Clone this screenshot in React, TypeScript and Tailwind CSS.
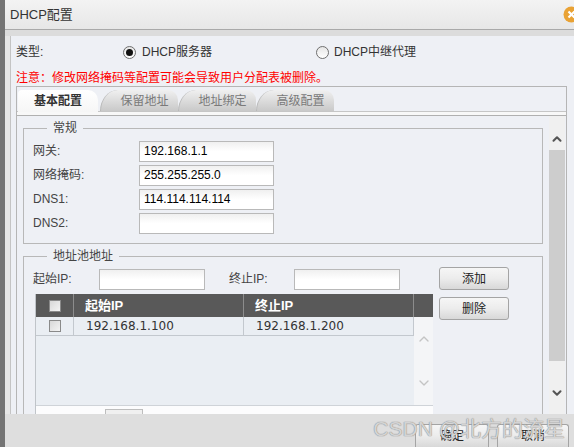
import { ChevronUp, ChevronDown } from "lucide-react";

const ui = "font-['Liberation_Sans','Noto_Sans_CJK_SC',sans-serif]";

function Radio({ checked }: { checked?: boolean }) {
  return (
    <span className="w-[13px] h-[13px] rounded-full border border-[#6f6f6f] bg-gradient-to-b from-[#e6e6e6] to-white flex items-center justify-center">
      {checked && <span className="w-[7px] h-[7px] rounded-full bg-[#111]" />}
    </span>
  );
}

function Field({ label, value }: { label: string; value?: string }) {
  return (
    <div className="h-[24px] flex items-center">
      <span className="w-[106px] text-[12px] text-[#444]">{label}</span>
      <div className="w-[135px] h-[21px] border border-[#b9b9b9] bg-gradient-to-b from-[#f0f0f0] via-white to-white pl-[4px] text-[12px] leading-[19px] text-black">
        {value}
      </div>
    </div>
  );
}

function Check() {
  return <span className="w-[12px] h-[12px] border border-[#8a8a8a] bg-gradient-to-br from-[#d8d8d8] to-[#f4f4f4] inline-block" />;
}

function Tab({ label, active }: { label: string; active?: boolean }) {
  if (active)
    return (
      <div className="w-[80px] h-[22px] mr-[2px] rounded-tr-[10px] rounded-tl-[4px] bg-gradient-to-b from-white to-[#f6f6f6] flex items-center justify-center text-[12px] font-bold text-[#333] relative top-px">
        {label}
      </div>
    );
  return (
    <div className="w-[78px] h-[21px] rounded-tr-[10px] rounded-tl-[18px_21px] bg-gradient-to-b from-[#f0f0f0] to-[#c9c9c9] flex items-center justify-center pl-[10px] text-[12px] text-[#7a7a7a] border-l border-[#b8b8b8]">
      {label}
    </div>
  );
}

function Button({ label, className = "" }: { label: string; className?: string }) {
  return (
    <div className={"h-[23px] border border-[#a4a4a4] rounded-[3px] bg-gradient-to-b from-[#f6f6f6] via-[#ececec] to-[#d8d8d8] flex items-center justify-center text-[12px] text-[#222] " + className}>
      {label}
    </div>
  );
}

export default function App() {
  return (
    <div className={"w-[574px] h-[447px] flex overflow-hidden relative bg-[#eef0f5] " + ui}>
      <div className="w-[5px] bg-[#747474]" />
      <div className="flex-1 flex flex-col min-w-0">
        {/* title bar */}
        <div className="h-[29px] bg-gradient-to-b from-[#f3f3f3] to-[#e7e7e7] flex items-center pl-[5px] text-[13px] text-[#333] relative">
          DHCP配置
          <svg className="absolute left-[558px] top-[6px]" width="17" height="17" viewBox="0 0 17 17">
            <circle cx="8.5" cy="8.5" r="8" fill="#e9a234" />
            <path d="M5.5 5.5l6 6M11.5 5.5l-6 6" stroke="#fff" strokeWidth="2.2" />
          </svg>
        </div>
        <div className="h-px bg-[#a9a9a9]" />
        <div className="h-[6px] bg-[#dcdcdc]" />

        {/* body */}
        <div className="flex-1 flex min-h-0">
          <div className="w-[5px] bg-[#e6e6e6] border-r border-[#c4c4c4] box-content" />
          <div className="flex-1 flex flex-col min-w-0 pl-[5px] pr-[7px] overflow-hidden">
            <div className="h-[20px] mt-[6px] flex items-center text-[12px] text-[#333]">
              <span className="w-[107px]">类型:</span>
              <div className="w-[193px] flex items-center gap-[6px]">
                <Radio checked />
                <span>DHCP服务器</span>
              </div>
              <div className="flex items-center gap-[5px]">
                <Radio />
                <span>DHCP中继代理</span>
              </div>
            </div>
            <div className="mt-[8px] h-[16px] leading-[16px] text-[12px] text-[#ff0000]">
              注意：修改网络掩码等配置可能会导致用户分配表被删除。
            </div>

            {/* tab box */}
            <div className="flex-1 flex flex-col border border-b-0 border-[#b5b5b5] min-h-0">
              <div className="h-[25px] flex items-end pl-px border-b border-[#c6c6c6]">
                <Tab label="基本配置" active />
                <Tab label="保留地址" />
                <Tab label="地址绑定" />
                <Tab label="高级配置" />
              </div>
              <div className="h-[3px] bg-[#f8f8f8]" />
              <div className="flex-1 flex border-t border-[#b0b0b0] min-h-0">
                <div className="flex-1 px-[6px] min-w-0">
                  {/* 常规 */}
                  <fieldset className="mt-[4px] border border-[#b8b8b8] pl-[9px] pb-[8px]">
                    <legend className="ml-[14px] px-[6px] text-[12px] leading-[16px] text-[#444]">常规</legend>
                    <div className="pt-[3px]">
                      <Field label="网关:" value="192.168.1.1" />
                      <Field label="网络掩码:" value="255.255.255.0" />
                      <Field label="DNS1:" value="114.114.114.114" />
                      <Field label="DNS2:" />
                    </div>
                  </fieldset>

                  {/* 地址池地址 */}
                  <fieldset className="mt-[4px] border border-[#b8b8b8] pl-[9px] pb-[8px]">
                    <legend className="ml-[14px] px-[6px] text-[12px] leading-[16px] text-[#444]">地址池地址</legend>
                    <div className="flex">
                      <div>
                        <div className="h-[24px] mt-[3px] flex items-center text-[12px] text-[#444]">
                          <span className="w-[66px]">起始IP:</span>
                          <div className="w-[106px] h-[21px] border border-[#b9b9b9] bg-gradient-to-b from-[#f0f0f0] via-white to-white" />
                          <span className="ml-[24px] w-[65px]">终止IP:</span>
                          <div className="w-[106px] h-[21px] border border-[#b9b9b9] bg-gradient-to-b from-[#f0f0f0] via-white to-white" />
                        </div>
                        {/* table */}
                        <div className="ml-[2px] mt-[3px] w-[398px] border-l border-[#c0c4c9]">
                          <div className="h-[23px] flex bg-[#595959] text-white text-[13px] font-bold">
                            <div className="w-[38px] border-r border-[#8c8c8c] flex items-center justify-center"><Check /></div>
                            <div className="w-[170px] border-r border-[#8c8c8c] flex items-center pl-[11px]">起始IP</div>
                            <div className="w-[170px] border-r border-[#8c8c8c] flex items-center pl-[11px]">终止IP</div>
                            <div className="flex-1" />
                          </div>
                          <div className="flex h-[88px]">
                            <div className="w-[378px] bg-[#eaeef3]">
                              <div className="h-[19px] flex border-b border-[#c3c8ce] text-[12px] text-[#333] font-['DejaVu_Sans',sans-serif]">
                                <div className="w-[38px] border-r border-[#c3c8ce] flex items-center justify-center"><Check /></div>
                                <div className="w-[170px] border-r border-[#c3c8ce] flex items-center pl-[12px]">192.168.1.100</div>
                                <div className="w-[170px] border-r border-[#c3c8ce] flex items-center pl-[12px]">192.168.1.200</div>
                              </div>
                            </div>
                            <div className="flex-1 bg-[#f4f5f7] flex flex-col items-center pt-[14px] text-[#c4c4c4]">
                              <ChevronUp size={16} strokeWidth={2} />
                              <div className="flex-1" />
                              <ChevronDown size={16} strokeWidth={2} className="mb-[14px]" />
                            </div>
                          </div>
                          <div className="h-[14px] bg-[#fcfcfd] border-t border-[#cfd3d8] relative">
                            <div className="absolute left-[69px] top-[3px] w-[38px] h-[12px] border border-[#bdbdbd] bg-[#f0f0f0]" />
                          </div>
                        </div>
                      </div>
                      <div className="ml-[6px] pt-[3px]">
                        <Button label="添加" className="w-[70px]" />
                        <Button label="删除" className="w-[70px] mt-[7px]" />
                      </div>
                    </div>
                  </fieldset>
                </div>
                {/* scrollbar */}
                <div className="w-[16px] mr-px bg-[#f0f0f0] flex flex-col items-center">
                  <div className="h-[34px] flex items-end pb-[4px] text-[#555]">
                    <ChevronUp size={14} strokeWidth={3.5} />
                  </div>
                  <div className="w-full h-[211px] bg-[#cdcdcd]" />
                  <div className="mt-[25px] text-[#555]">
                    <ChevronDown size={14} strokeWidth={3.5} />
                  </div>
                </div>
              </div>
            </div>
          </div>
        </div>

        {/* bottom bar */}
        <div className="h-[33px] bg-[#dedede] flex items-end justify-end pr-[5px] gap-[8px]">
          <Button label="确定" className="w-[74px] h-[21px] rounded-b-none border-b-0" />
          <Button label="取消" className="w-[72px] h-[21px] rounded-b-none border-b-0" />
        </div>
      </div>

      <div className="absolute right-[9px] bottom-[6px] text-[21px] leading-[24px] text-[rgba(245,245,245,0.7)] [text-shadow:0_0_1px_#8a8a8a,0_0_1px_#8a8a8a] font-['Liberation_Sans','Noto_Sans_CJK_SC',sans-serif] pointer-events-none">
        CSDN @北方的流星
      </div>
    </div>
  );
}
